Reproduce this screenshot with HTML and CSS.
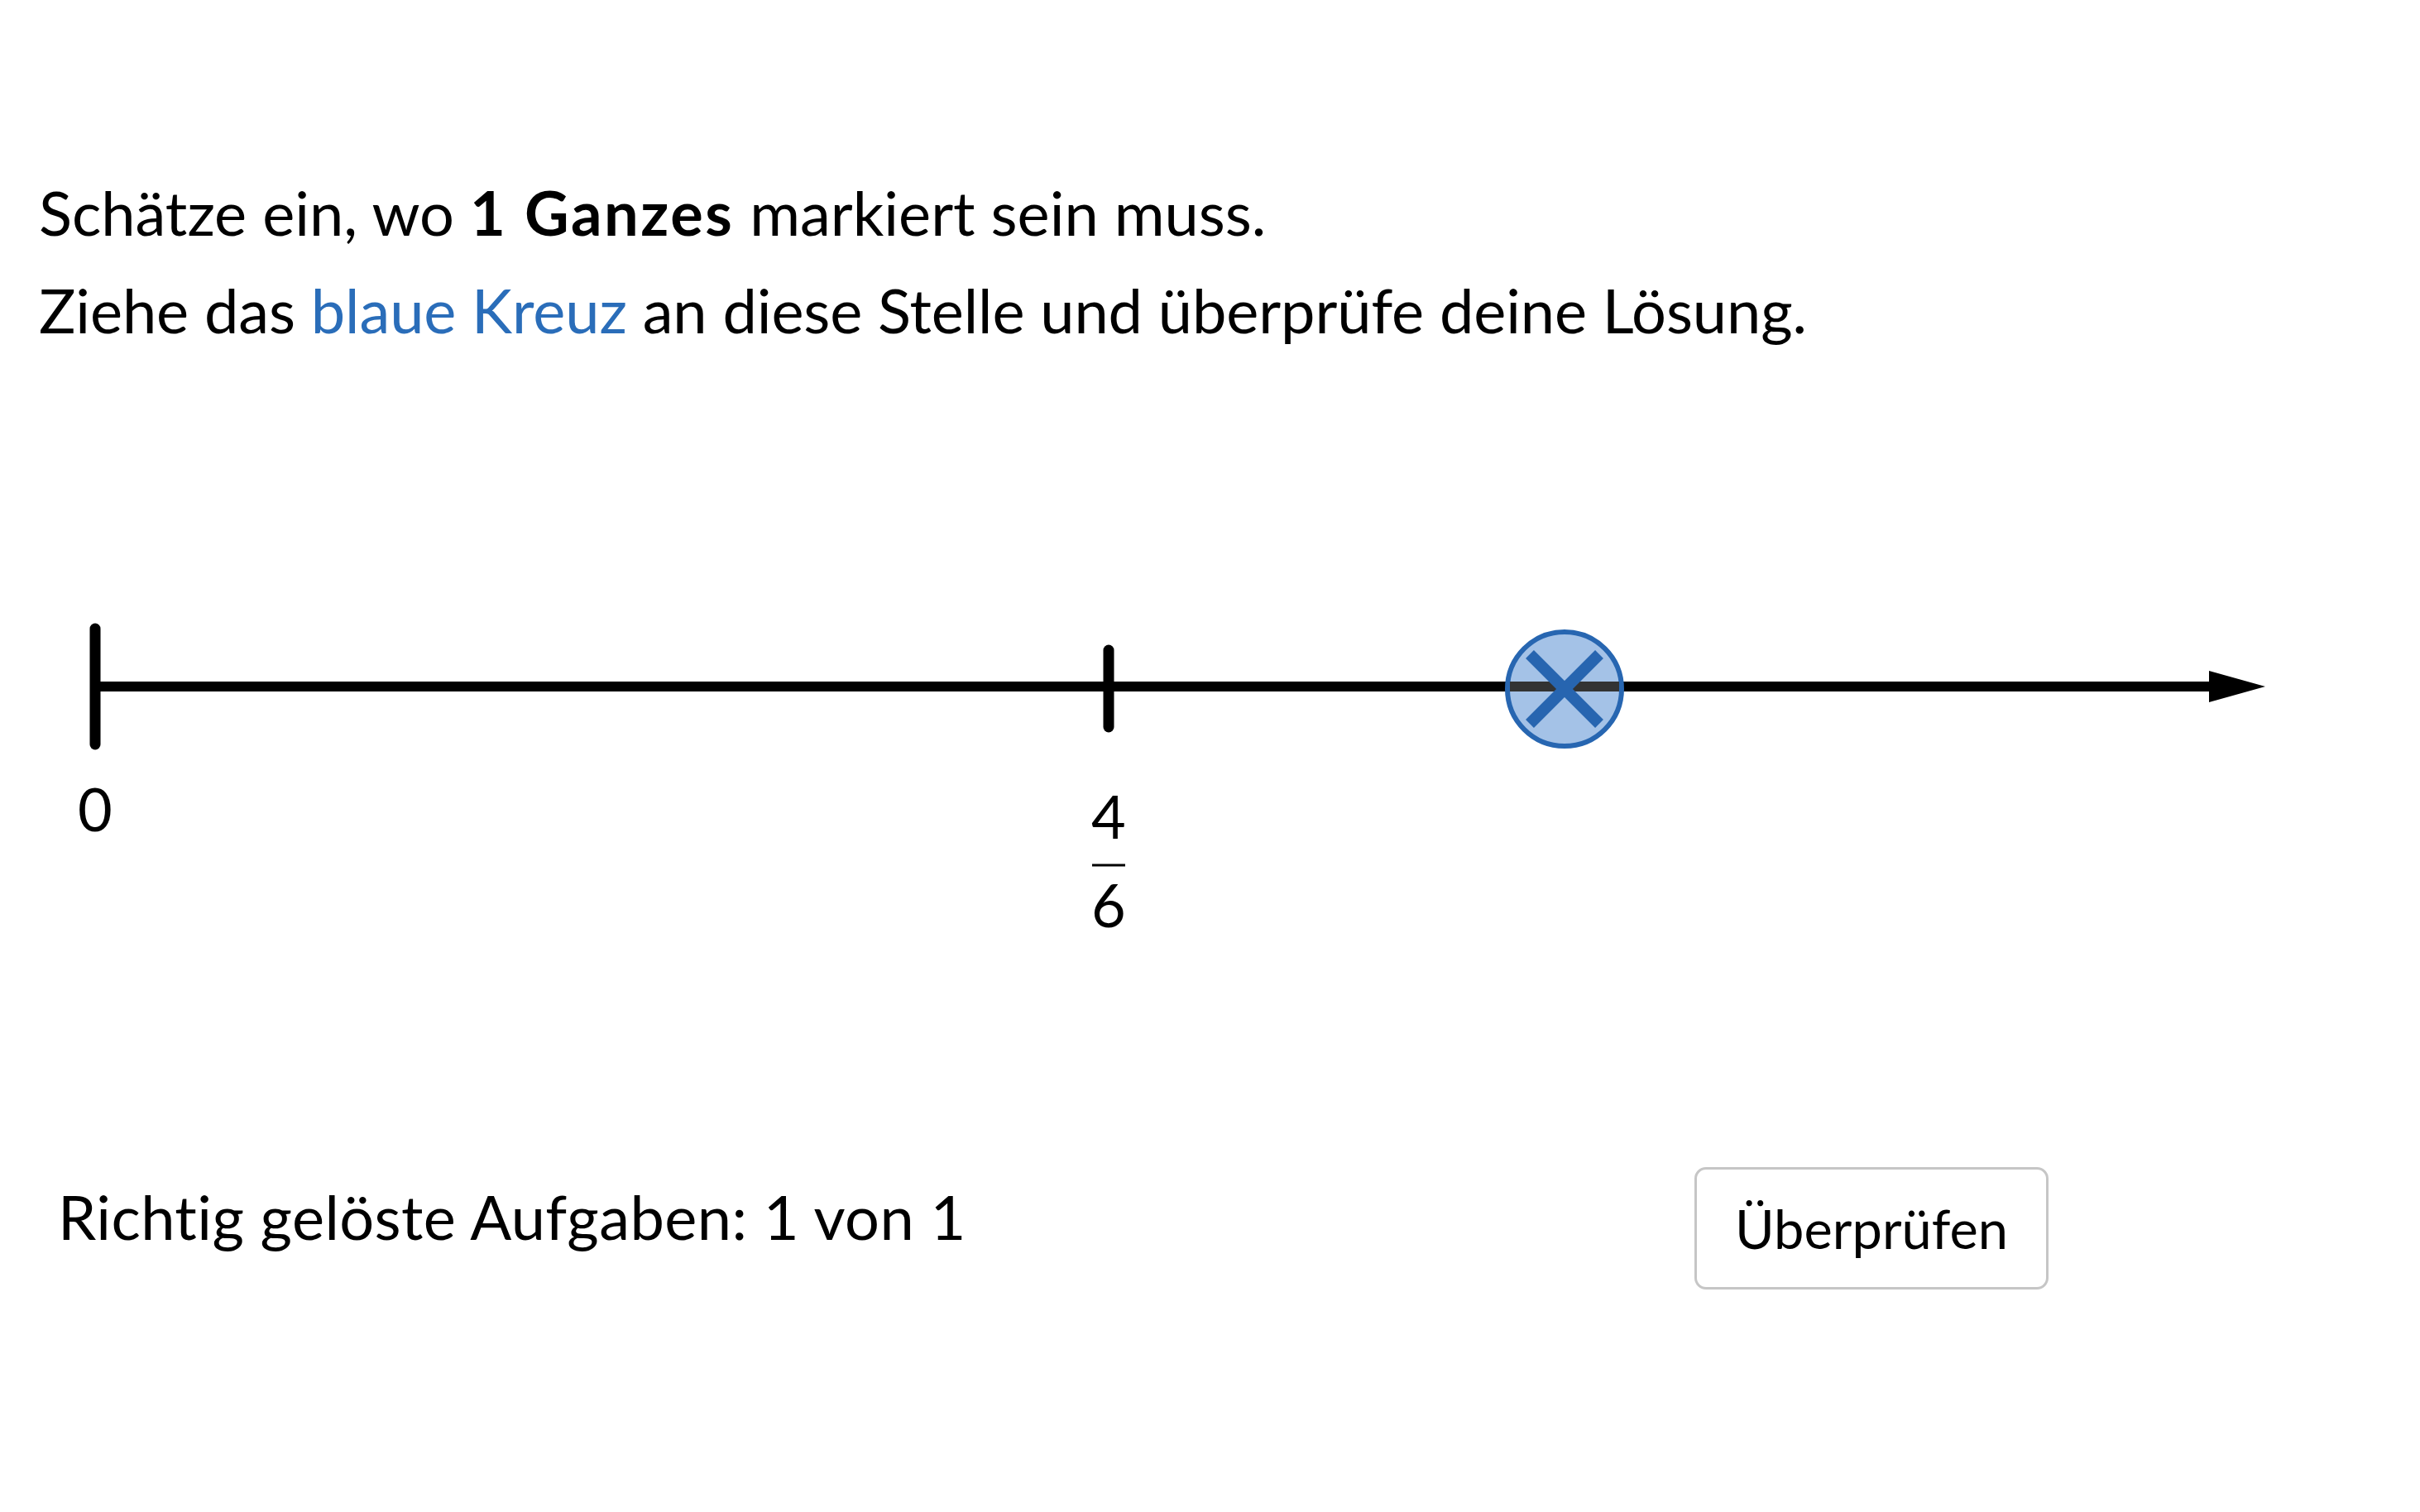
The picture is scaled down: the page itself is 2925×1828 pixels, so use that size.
FILE: index.html
```html
<!DOCTYPE html>
<html lang="de">
<head>
<meta charset="utf-8">
<title>Zahlenstrahl</title>
<link rel="stylesheet" href="styles.css">
</head>
<body>
<div class="page">
  <div class="prompt">
    <p>Schätze ein, wo <b>1 Ganzes</b> markiert sein muss.</p>
    <p class="second">Ziehe das <span class="blue">blaue Kreuz</span> an diese Stelle und überprüfe deine Lösung.</p>
  </div>
  <div class="numberline">
    <svg class="nl-svg" width="2925" height="500" viewBox="0 0 2925 500">
      <line x1="115" y1="132" x2="2672" y2="132" stroke="#000" stroke-width="12"/>
      <polygon points="2670,113 2738,132 2670,151" fill="#000"/>
      <line x1="115" y1="62" x2="115" y2="202" stroke="#000" stroke-width="13" stroke-linecap="round"/>
      <line x1="1340" y1="88" x2="1340" y2="181" stroke="#000" stroke-width="13" stroke-linecap="round"/>
      <text class="lbl" x="115" y="307" text-anchor="middle">0</text>
      <text class="lbl" x="1340" y="316" text-anchor="middle">4</text>
      <line x1="1320" y1="348" x2="1360" y2="348" stroke="#000" stroke-width="3"/>
      <text class="lbl" x="1340" y="423" text-anchor="middle">6</text>
      <g class="cross">
        <circle cx="1891" cy="135" r="69" fill="#a4c2e7" stroke="#2766b1" stroke-width="6"/>
        <line x1="1825" y1="132" x2="1957" y2="132" stroke="#333" stroke-width="12"/>
        <line x1="1849" y1="93" x2="1933" y2="177" stroke="#2765b0" stroke-width="14"/>
        <line x1="1933" y1="93" x2="1849" y2="177" stroke="#2765b0" stroke-width="14"/>
      </g>
    </svg>
  </div>
  <div class="footer">
    <span class="score">Richtig gelöste Aufgaben: 1 von 1</span>
    <button class="check">Überprüfen</button>
  </div>
</div>
</body>
</html>
```
FILE: styles.css
```css
html, body {
  margin: 0;
  padding: 0;
  background: #fff;
}
body {
  font-family: Lato, "Open Sans", sans-serif;
  font-size: 74px;
  color: #000;
  font-variant-ligatures: none;
  font-feature-settings: "liga" 0, "clig" 0;
}
.page {
  width: 2925px;
  height: 1828px;
  overflow: hidden;
}
.prompt {
  padding: 198px 0 0 47px;
}
.prompt p {
  margin: 0;
  line-height: 118px;
  white-space: nowrap;
}
.prompt .second {
  letter-spacing: -0.1px;
}
.prompt b {
  font-weight: 700;
  letter-spacing: 2.5px;
}
.blue {
  color: #2a6db9;
}
.numberline {
  margin-top: 264px;
  height: 500px;
}
.nl-svg {
  display: block;
}
.lbl {
  font-family: Lato, "Open Sans", sans-serif;
  font-size: 72px;
  fill: #000;
}
.footer {
  margin-top: 213px;
  display: flex;
  align-items: flex-start;
  padding: 0 449px 0 70px;
}
.score {
  margin-top: 15px;
  white-space: nowrap;
  letter-spacing: 0.4px;
}
.check {
  margin-left: auto;
  width: 428px;
  height: 148px;
  border: 3px solid #c6c6c6;
  border-radius: 14px;
  background: #fff;
  font-family: Lato, "Open Sans", sans-serif;
  font-size: 65px;
  color: #000;
  padding: 0;
  font-variant-ligatures: none;
}
```
